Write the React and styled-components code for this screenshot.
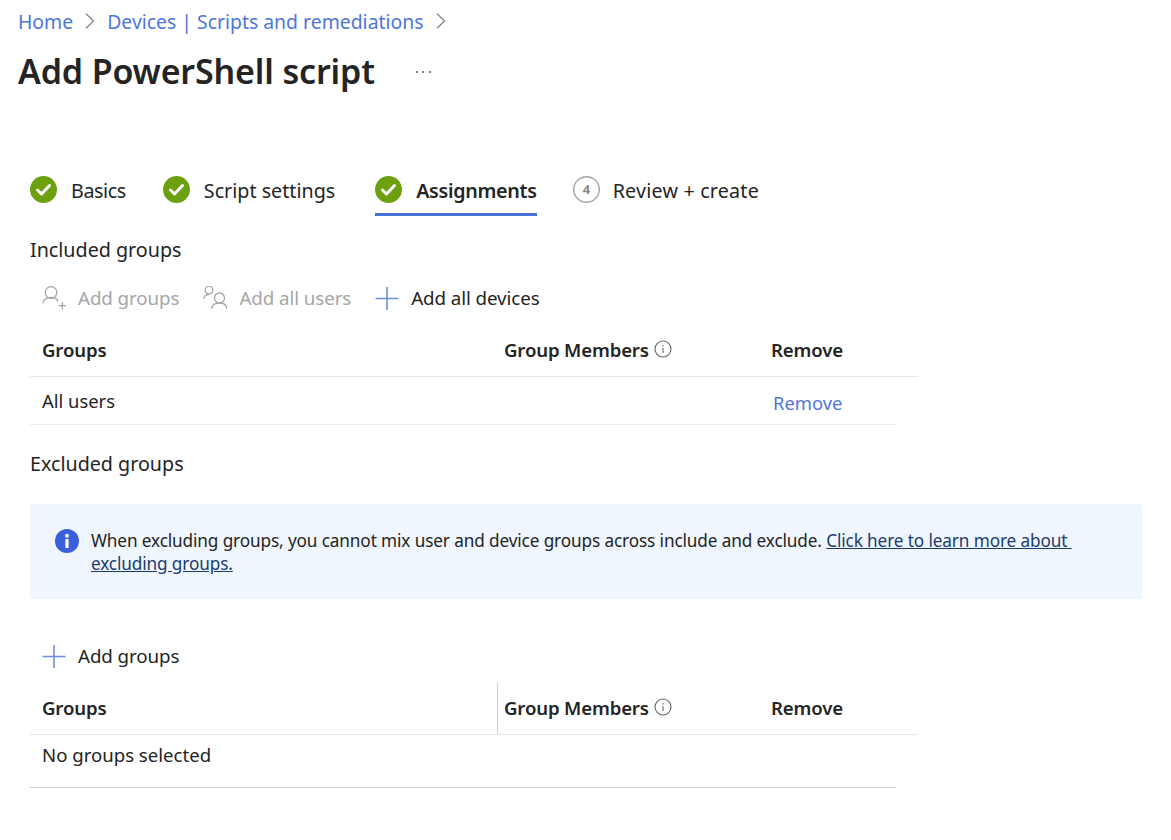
import React from 'react';
import styled, { createGlobalStyle } from 'styled-components';

const Global = createGlobalStyle`
  html, body { margin: 0; padding: 0; background: #fff; }
  body { font-family: "Noto Sans", "Open Sans", sans-serif; color: #242424; }
`;
const Page = styled.div`
  width: 1171px; height: 840px; overflow: hidden; box-sizing: border-box;
  display: flex; flex-direction: column;
`;
const Crumbs = styled.nav`
  display: flex; align-items: center; height: 24px; margin: 9px 0 0 18px;
  font-size: 19.4px;
`;
const CrumbLink = styled.a`color: #4f76db; white-space: nowrap;`;
const CrumbSep = styled.svg`width: 10px; height: 16px; margin: 0 12px; flex: none; fill: none; stroke: #808080; stroke-width: 1.2;`;
const TitleRow = styled.div`display: flex; align-items: center; height: 48px; margin: 14px 0 0 18px;`;
const Title = styled.h1`margin: 0; font-size: 34px; font-weight: 600; line-height: 48px; color: #242424; letter-spacing: -0.15px;`;
const More = styled.span`margin-left: 41px; display: flex; gap: 4.5px; margin-top: 1px;`;
const Dot = styled.i`width: 2px; height: 2px; border-radius: 50%; background: #555; display: block;`;
const Body = styled.div`display: flex; flex-direction: column; margin: 1px 0 0 30px;`;
const Steps = styled.div`display: flex; height: 40px; margin-top: 80px;`;
const Step = styled.div`
  display: flex; align-items: flex-start; gap: ${p => p.$gap || 13}px; height: 40px; box-sizing: border-box; margin-right: ${p => p.$mr}px;
  border-bottom: 3px solid ${p => (p.$active ? '#4472d6' : 'transparent')};
`;
const StepLabel = styled.span`
  font-size: 19.7px; line-height: 29px; font-weight: ${p => (p.$active ? 600 : 400)}; white-space: nowrap;
  letter-spacing: ${p => p.$ls || 0}px;
`;
const StepIcon = styled.svg`width: 28px; height: 28px; flex: none;`;
const Section = styled.div`font-size: 19.7px; line-height: 26px; margin-top: ${p => p.$mt}px;`;
const Toolbar = styled.div`display: flex; align-items: center; height: 30px; margin: ${p => p.$mt}px 0 0 12px;`;
const Tool = styled.div`
  display: flex; align-items: center; gap: 12px; font-size: 18.8px; margin-right: ${p => p.$mr || 0}px; letter-spacing: -0.1px;
  color: ${p => (p.$disabled ? '#a6a6a6' : '#242424')}; white-space: nowrap;
`;
const ToolIcon = styled.svg`width: 24px; height: 24px; flex: none; fill: none; stroke: ${p => p.$c}; stroke-width: ${p => p.$w || 1.3};`;
const HeadRow = styled.div`
  display: grid; grid-template-columns: 474px 267px 1fr; width: 888px; height: 64px; box-sizing: border-box;
  border-bottom: 1px solid #e8e8e8; align-items: end;
`;
const HeadCell = styled.div`
  font-size: 18.6px; font-weight: 600; padding: 0 0 14px 12px; height: ${p => p.$h || 'auto'}; box-sizing: border-box; letter-spacing: -0.15px;
  display: flex; align-items: flex-end; gap: 5px; white-space: nowrap;
  ${p => p.$div && 'border-left: 1px solid #cfcfcf; padding-left: 6px; margin-left: -7px;'}
  ${p => p.$alt && 'padding-left: 6px; margin-left: -6px;'}
  ${p => p.$rm && 'padding-left: 0;'}
`;
const InfoIcon = styled.svg`width: 18px; height: 18px; margin-bottom: 4px; fill: none; stroke: #666; stroke-width: 1.1;`;
const DataRow = styled.div`
  display: grid; grid-template-columns: 741px 1fr; width: 866px; height: ${p => p.$h || 48}px; box-sizing: border-box; align-items: center;
  border-bottom: 1px solid ${p => p.$bc || '#ededed'}; font-size: 18.4px;
`;
const RowCell = styled.div`padding-left: 12px; line-height: 24px;`;
const RemoveLink = styled.a`color: #4f76db; padding-left: 2px; margin-top: 4px; white-space: nowrap;`;
const Banner = styled.div`
  display: flex; gap: 12px; width: 1112px; height: 95px; box-sizing: border-box; margin-top: 27px;
  padding: 25px 60px 0 25px; background: #f0f6fe; border-radius: 2px; font-size: 17.2px; line-height: 23px; color: #242424;
`;
const BannerIcon = styled.svg`width: 24px; height: 24px; flex: none;`;
const BannerText = styled.div`letter-spacing: -0.12px;`;
const BannerLink = styled.a`color: #1b3a6f; text-decoration: underline;`;
const Empty = styled.div`font-size: 18.6px; padding-left: 12px; margin-bottom: 14px;`;

const Check = () => (
  <StepIcon viewBox="0 0 28 28">
    <circle cx="13.500" cy="13.500" r="13.500" fill="#6ca00f" />
    <path d="M7.500 14l4 4 8-8.500" fill="none" stroke="#fff" strokeWidth="3" strokeLinecap="round" strokeLinejoin="round" />
  </StepIcon>
);
const Number4 = styled.text`font-size: 13px; font-weight: 700; fill: #8a8a8a; font-family: "Noto Sans", sans-serif;`;
const Four = () => (
  <StepIcon viewBox="0 0 28 28">
    <circle cx="13.500" cy="13.500" r="12.800" fill="none" stroke="#a6a6a6" strokeWidth="1.400" />
    <Number4 x="13.500" y="18" textAnchor="middle">4</Number4>
  </StepIcon>
);
const Plus = () => (
  <ToolIcon $c="#6d90dc" $w={1.6} viewBox="0 0 24 24">
    <path d="M12 1v23M0.500 12.500h23" />
  </ToolIcon>
);
const Info = () => (
  <InfoIcon viewBox="0 0 18 18">
    <circle cx="9" cy="9" r="8" />
    <path d="M9 8v5M9 5v1.400" />
  </InfoIcon>
);
const Chevron = () => (
  <CrumbSep viewBox="0 0 10 16"><path d="M1 .7l7.500 7.300L1 15.300" /></CrumbSep>
);

export default function App() {
  return (
    <Page>
      <Global />
      <Crumbs>
        <CrumbLink>Home</CrumbLink>
        <Chevron />
        <CrumbLink>Devices | Scripts and remediations</CrumbLink>
        <Chevron />
      </Crumbs>
      <TitleRow>
        <Title>Add PowerShell script</Title>
        <More><Dot /><Dot /><Dot /></More>
      </TitleRow>
      <Body>
        <Steps>
          <Step $mr={37}><Check /><StepLabel $ls={-0.4}>Basics</StepLabel></Step>
          <Step $mr={40}><Check /><StepLabel>Script settings</StepLabel></Step>
          <Step $mr={36} $active><Check /><StepLabel $active $ls={-0.3}>Assignments</StepLabel></Step>
          <Step $mr={0} $gap={12}><Four /><StepLabel $ls={0.2}>Review + create</StepLabel></Step>
        </Steps>
        <Section $mt={21}>Included groups</Section>
        <Toolbar $mt={20}>
          <Tool $disabled $mr={24}>
            <ToolIcon $c="#a6a6a6" viewBox="0 0 24 24">
              <circle cx="9" cy="6.500" r="5.800" />
              <path d="M.8 17.500c.5-4 3.800-6 8.200-6s6.300 1.500 6.800 4M20.300 16v7.500M16.500 19.700h7.500" />
            </ToolIcon>
            Add groups
          </Tool>
          <Tool $disabled $mr={24}>
            <ToolIcon $c="#a6a6a6" viewBox="0 0 24 24">
              <circle cx="6" cy="4" r="3.800" />
              <circle cx="16.500" cy="12" r="5" />
              <path d="M.8 13c0-2.500 2-4.500 5-4.500M8.700 23c.2-4 3.200-6 7.500-6s7.500 2 7.500 6" />
            </ToolIcon>
            Add all users
          </Tool>
          <Tool><Plus />Add all devices</Tool>
        </Toolbar>
        <HeadRow>
          <HeadCell>Groups</HeadCell>
          <HeadCell $alt>Group Members<Info /></HeadCell>
          <HeadCell $rm>Remove</HeadCell>
        </HeadRow>
        <DataRow>
          <RowCell>All users</RowCell>
          <RemoveLink>Remove</RemoveLink>
        </DataRow>
        <Section $mt={26}>Excluded groups</Section>
        <Banner>
          <BannerIcon viewBox="0 0 24 24">
            <circle cx="12" cy="12" r="12" fill="#3b5fdb" />
            <rect x="10.400" y="10" width="3.200" height="9" fill="#fff" />
            <circle cx="12" cy="6.800" r="2" fill="#fff" />
          </BannerIcon>
          <BannerText>
            When excluding groups, you cannot mix user and device groups across include and exclude.{' '}
            <BannerLink>Click here to learn more about{'\u00a0'}<wbr />excluding groups.</BannerLink>
          </BannerText>
        </Banner>
        <Toolbar $mt={42}><Tool><Plus />Add groups</Tool></Toolbar>
        <HeadRow>
          <HeadCell>Groups</HeadCell>
          <HeadCell $div $h="52px">Group Members<Info /></HeadCell>
          <HeadCell $rm>Remove</HeadCell>
        </HeadRow>
        <DataRow $bc="#cfcfcf" $h={53}>
          <Empty>No groups selected</Empty>
        </DataRow>
      </Body>
    </Page>
  );
}
